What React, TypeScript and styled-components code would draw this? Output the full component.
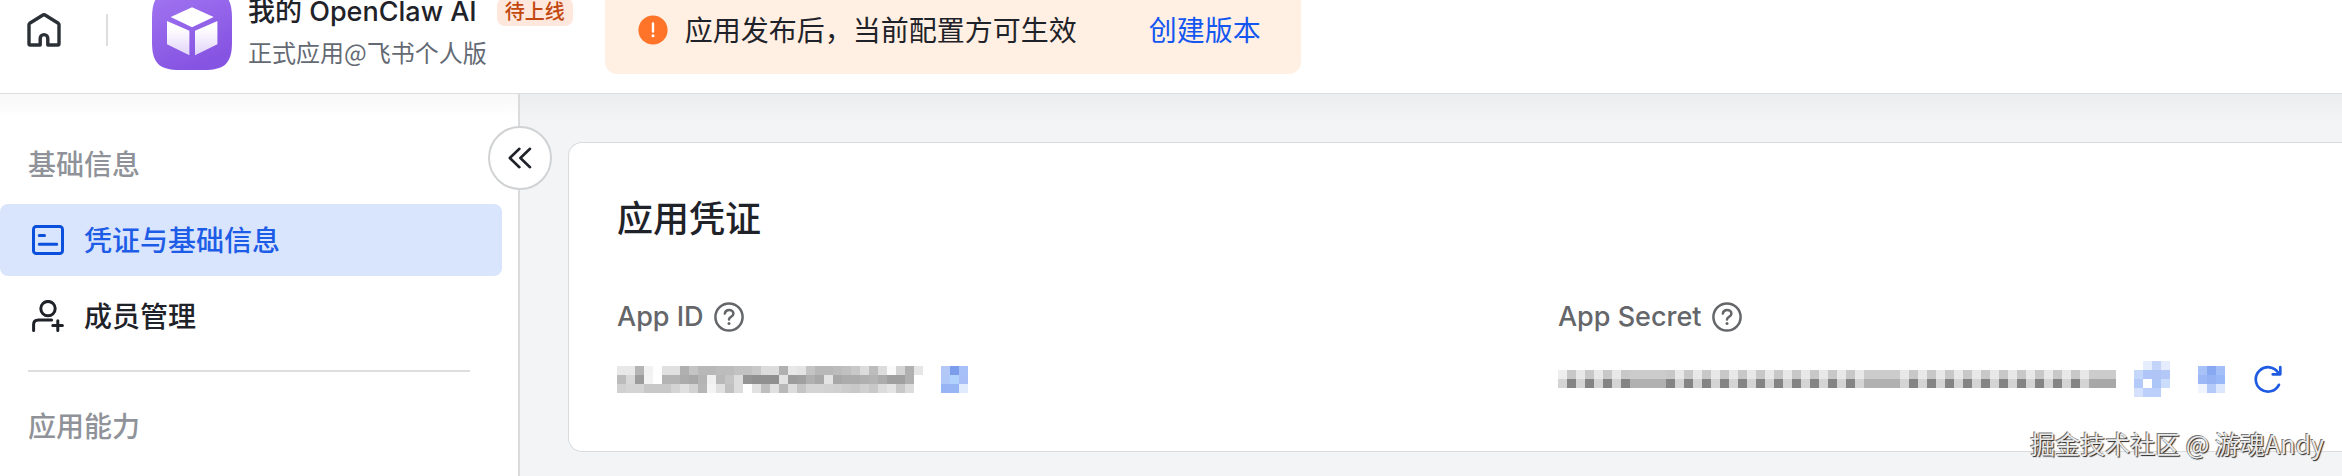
import React from 'react';
import styled, { createGlobalStyle, css } from 'styled-components';

const GlobalStyle = createGlobalStyle`
  *, *::before, *::after { box-sizing: border-box; }
  body {
    margin: 0;
    background: #f2f4f6;
    color: #1f2329;
    font-family: Inter, "Noto Sans CJK SC", sans-serif;
    overflow-x: hidden;
  }
  h1, h2, p, dl, dt, dd, ul { margin: 0; padding: 0; }
  svg { display: block; flex: none; }
`;

const Page = styled.div`
  position: relative;
  min-height: 100vh;
  display: flex;
  flex-direction: column;
  overflow: hidden;
`;

const Header = styled.header`
  display: flex;
  align-items: center;
  height: 94px;
  padding: 0 27px 33px;
  background: #fff;
  border-bottom: 1px solid #dcdee0;
`;

const plainButton = css`
  display: flex;
  align-items: center;
  justify-content: center;
  padding: 0;
  border: 0;
  background: none;
  color: inherit;
  cursor: pointer;
`;

const HomeLink = styled.a`
  color: #2b2f36;
`;

const HeaderRule = styled.span`
  width: 2px;
  height: 32px;
  margin: 0 44px 0 45px;
  background: #dcdee0;
`;

const AppSummary = styled.div`
  margin-left: 16px;
`;

const TitleRow = styled.div`
  display: flex;
  align-items: center;
  gap: 20px;
  height: 42px;
  margin-bottom: 2px;
`;

const AppName = styled.h1`
  font-size: 27px;
  line-height: 42px;
  font-weight: 500;
  white-space: nowrap;
`;

const Tag = styled.span`
  padding: 0 8px;
  border-radius: 8px;
  background: #fee7dc;
  color: #c2480f;
  font-size: 20px;
  line-height: 28px;
  font-weight: 500;
`;

const AppOwner = styled.p`
  color: #646a73;
  font-family: "Noto Sans CJK SC", sans-serif;
  font-size: 24px;
  line-height: 34px;
`;

const Notice = styled.div`
  display: flex;
  align-items: center;
  height: 88px;
  margin-left: 32px;
  padding: 0 40px 0 33px;
  border-radius: 12px;
  background: #fff0e3;
  font-size: 28px;
  white-space: nowrap;
`;

const NoticeText = styled.span`
  margin: 0 72px 0 17px;
  padding-bottom: 2px;
`;

const TextLink = styled.a`
  padding-bottom: 2px;
  color: #1456f0;
  text-decoration: none;
`;

const Body = styled.div`
  flex: 1;
  display: flex;
  background: linear-gradient(#ebecee, #f2f4f6 26px);
`;

const Sidebar = styled.nav`
  position: relative;
  flex: none;
  width: 520px;
  padding: 51px 16px 10px 0;
  border-right: 2px solid #d9dbdd;
  background: linear-gradient(#f8f8f9, #fff 24px);
`;

const GroupTitle = styled.h2`
  padding-left: 28px;
  color: #8f9399;
  font-size: 28px;
  line-height: 40px;
  font-weight: 500;
`;

const NavList = styled.ul`
  display: flex;
  flex-direction: column;
  gap: 4px;
  margin-top: 19px;
  list-style: none;
`;

const NavLink = styled.a<{ $active?: boolean }>`
  display: flex;
  align-items: center;
  gap: 20px;
  height: 72px;
  padding-left: 32px;
  border-radius: 8px;
  background: ${p => (p.$active ? '#d9e4fd' : 'transparent')};
  color: ${p => (p.$active ? '#1d5ce6' : '#1f2329')};
  font-size: 28px;
  font-weight: 500;
  text-decoration: none;
`;

const NavText = styled.span`
  padding-bottom: 2px;
`;

const NavRule = styled.hr`
  height: 2px;
  margin: 18px 32px 35px 28px;
  border: 0;
  background: #dcdedf;
`;

const CollapseButton = styled.button`
  ${plainButton}
  position: absolute;
  top: 32px;
  right: -34px;
  width: 64px;
  height: 64px;
  border: 2px solid #d0d2d4;
  border-radius: 50%;
  background: #fff;
`;

const Main = styled.main`
  flex: 1;
  min-width: 0;
  padding: 48px 0 24px 48px;
`;

const Card = styled.section`
  padding: 52px 0 52px 48px;
  border: 1px solid #d9dcdf;
  border-right: 0;
  border-radius: 14px 0 0 14px;
  background: #fff;
`;

const CardTitle = styled.h2`
  font-size: 36px;
  line-height: 48px;
  font-weight: 500;
`;

const Fields = styled.dl`
  display: grid;
  grid-template-columns: 6fr 5fr;
  margin-top: 54px;
`;

const FieldLabel = styled.dt`
  display: flex;
  align-items: center;
  gap: 10px;
  margin-bottom: 22px;
  color: #646669;
  font-size: 27px;
  line-height: 40px;
  font-weight: 500;
`;

const FieldValue = styled.dd`
  display: flex;
  align-items: center;
  height: 40px;
`;

const IconButton = styled.button<{ $gap: number }>`
  ${plainButton}
  margin-left: ${p => p.$gap}px;
`;

const Watermark = styled.div`
  position: absolute;
  right: 18px;
  bottom: 15px;
  color: #e9e9e9;
  font-family: "Noto Sans CJK SC", sans-serif;
  font-size: 25px;
  line-height: 36px;
  text-shadow: 1px 1px 1px #222, -1px -1px 0 #777;
`;

/* Pixelated block used where a private value is masked. */
const CELL = 9;
const Mosaic = ({ rows }: { rows: string[][] }) => (
  <svg
    width={rows[0].length * CELL}
    height={rows.length * CELL}
    shapeRendering="crispEdges"
    aria-hidden="true"
  >
    {rows.map((row, y) =>
      row.map((fill, x) => (
        <rect key={`${x}-${y}`} x={x * CELL} y={y * CELL} width={CELL} height={CELL} fill={fill} />
      )),
    )}
  </svg>
);

const grays = (line: string) => line.split(' ').map(v => `#${v}${v}${v}`);
const colors = (line: string) => line.split(' ').map(v => `#${v}`);

const idRows = [
  grays('e8 e8 b4 f2 fe e0 e0 b0 c4 b8 b8 bc bc c2 c2 c8 dc dc b0 e8 e4 c4 b8 b8 bc c0 c8 dc bc dc fa d4 b0 e6'),
  grays('bc d8 9c f4 ff b4 b4 ac a8 b4 f0 b8 c4 dc 94 90 90 90 e2 9c a0 b0 a8 e4 a8 ac ac b0 b4 ac a0 a0 b0 ff'),
  grays('d0 d4 d4 c8 c8 c8 d4 e0 d2 b6 f4 e0 c0 dc ff e2 be e0 b8 dc c4 d4 d4 d2 d0 cc c8 d0 c8 dc e4 c8 dc ff'),
];

const secretColumns = Array.from({ length: 62 }, (_, i) => {
  if (i === 0) return ['ee', 'd4'];
  if ((i >= 8 && i <= 11) || (i >= 34 && i <= 37)) return ['cc', 'b0'];
  if (i >= 59) return ['cc', 'a8'];
  const dark = i < 8 ? i % 2 === 1 : i < 34 ? i % 2 === 0 : i % 2 === 1;
  return dark ? ['c8', '84'] : ['e8', 'd4'];
});
const secretRows = [0, 1].map(r => secretColumns.map(c => `#${c[r]}${c[r]}${c[r]}`));

const copyRows = [
  colors('b4c8f8 7c9cec a8c0f8'),
  colors('b0c8f8 b0d2fc a8bef6'),
  colors('98b4f4 98b6f4 e0ecfe'),
];
const revealRows = [
  colors('ffffff e6eefe c4d4f8 e4ecfe'),
  colors('c4d6fa b0c6f8 b0c4f6 b4c8f8'),
  colors('b4cafa ffffff acc6f8 ccdcfc'),
  colors('d4e0fc bccefa bccefa ffffff'),
];
const secretCopyRows = [
  colors('a8c2f8 88a8f2 a4bef8'),
  colors('9cb8f6 94b2f4 98b8f8'),
  colors('eff4fe b4caf8 dce6fc'),
];

const HomeIcon = () => (
  <svg width="34" height="34" viewBox="0 0 34 34" fill="none" stroke="currentColor" strokeWidth="3.4" strokeLinejoin="round" strokeLinecap="round">
    <path d="M2 11.6Q2 10.8 2.7 10.3L16 2Q17 1.4 18 2L31.3 10.3Q32 10.8 32 11.6V30.8Q32 32 30.8 32H20.8V25.4a3.8 3.8 0 0 0-7.6 0V32H3.2Q2 32 2 30.8Z" />
  </svg>
);

const AppLogo = () => (
  <svg width="80" height="80" viewBox="0 0 80 80" aria-hidden="true">
    <defs>
      <linearGradient id="logoBg" x1="0" y1="0" x2="0.4" y2="1">
        <stop offset="0" stopColor="#a276f2" />
        <stop offset="1" stopColor="#8654e2" />
      </linearGradient>
      <linearGradient id="logoFace" x1="0" y1="0" x2="0" y2="1">
        <stop offset="0.2" stopColor="#fff" />
        <stop offset="1" stopColor="#e2d4f9" />
      </linearGradient>
    </defs>
    <path d="M0 28C0 7 7 0 28 0H52C73 0 80 7 80 28V52C80 73 73 80 52 80H28C7 80 0 73 0 52Z" fill="url(#logoBg)" />
    <path d="M40 17.3 61.7 26.9 40 37.3 18.7 26.9Z" fill="#fff" />
    <path d="M15 31 37.4 40.8V65.3L15 54.3Z" fill="url(#logoFace)" />
    <path d="M65.4 31 43 40.8V65.3L65.4 54.3Z" fill="url(#logoFace)" />
  </svg>
);

const WarningIcon = () => (
  <svg width="30" height="30" viewBox="0 0 30 30" aria-hidden="true">
    <circle cx="15" cy="15" r="14.6" fill="#ff7429" />
    <path d="M15 8.5v8" stroke="#fff" strokeWidth="2.4" strokeLinecap="round" />
    <circle cx="15" cy="20.8" r="1.5" fill="#fff" />
  </svg>
);

const CardIcon = () => (
  <svg width="32" height="32" viewBox="0 0 32 32" fill="none" stroke="#0b50dc" strokeWidth="3" strokeLinecap="round">
    <rect x="1.5" y="2.4" width="29" height="27.2" rx="2.8" />
    <path d="M7.3 11.4h5.2M7.3 20.3h17.4" />
  </svg>
);

const MemberIcon = () => (
  <svg width="32" height="32" viewBox="0 0 32 32" fill="none" stroke="currentColor" strokeWidth="3" strokeLinecap="round" strokeLinejoin="round">
    <circle cx="16" cy="8.6" r="7.2" />
    <path d="M1.6 30.4V24.6Q1.6 20 6.4 20H19.6M20.8 25.6H30.4M25.8 20.8V30.4" />
  </svg>
);

const CollapseIcon = () => (
  <svg width="24" height="24" viewBox="0 0 24 24" fill="none" stroke="#1f2329" strokeWidth="2.6" strokeLinecap="round" strokeLinejoin="round">
    <path d="M11.4 2.8 1.8 12l9.6 9.2M22 2.8 12.4 12l9.6 9.2" />
  </svg>
);

const HelpIcon = () => (
  <svg width="30" height="30" viewBox="0 0 30 30" fill="none" stroke="currentColor" strokeWidth="2.5" strokeLinecap="round" strokeLinejoin="round">
    <circle cx="15" cy="15" r="13.6" />
    <path d="M10.8 11.6C11.2 9.2 12.9 8 15 8c2.5 0 4.4 1.5 4.4 3.700C19.4 14.8 15 14.800 15 17.6" />
    <circle cx="15" cy="21.600" r="1.500" fill="currentColor" stroke="none" />
  </svg>
);

const RefreshIcon = () => (
  <svg width="30" height="30" viewBox="0 0 30 30" fill="none" stroke="#1f5be0" strokeWidth="2.7" strokeLinecap="round" strokeLinejoin="round">
    <path d="M25.9 20.8A12.2 12.2 0 1 1 25.3 8.9M27.3 3.2V10.3H19.7" />
  </svg>
);

export default function App() {
  return (
    <>
      <GlobalStyle />
      <Page>
        <Header>
          <HomeLink href="#home" aria-label="首页">
            <HomeIcon />
          </HomeLink>
          <HeaderRule />
          <AppLogo />
          <AppSummary>
            <TitleRow>
              <AppName>我的 OpenClaw AI</AppName>
              <Tag>待上线</Tag>
            </TitleRow>
            <AppOwner>正式应用@飞书个人版</AppOwner>
          </AppSummary>
          <Notice role="status">
            <WarningIcon />
            <NoticeText>应用发布后，当前配置方可生效</NoticeText>
            <TextLink href="#version">创建版本</TextLink>
          </Notice>
        </Header>
        <Body>
          <Sidebar>
            <GroupTitle>基础信息</GroupTitle>
            <NavList>
              <li>
                <NavLink href="#credentials" $active aria-current="page">
                  <CardIcon />
                  <NavText>凭证与基础信息</NavText>
                </NavLink>
              </li>
              <li>
                <NavLink href="#members">
                  <MemberIcon />
                  <NavText>成员管理</NavText>
                </NavLink>
              </li>
            </NavList>
            <NavRule />
            <GroupTitle>应用能力</GroupTitle>
            <CollapseButton type="button" aria-label="收起导航">
              <CollapseIcon />
            </CollapseButton>
          </Sidebar>
          <Main>
            <Card>
              <CardTitle>应用凭证</CardTitle>
              <Fields>
                <div>
                  <FieldLabel>
                    App ID
                    <HelpIcon />
                  </FieldLabel>
                  <FieldValue>
                    <Mosaic rows={idRows} />
                    <IconButton type="button" $gap={18} aria-label="复制 App ID">
                      <Mosaic rows={copyRows} />
                    </IconButton>
                  </FieldValue>
                </div>
                <div>
                  <FieldLabel>
                    App Secret
                    <HelpIcon />
                  </FieldLabel>
                  <FieldValue>
                    <Mosaic rows={secretRows} />
                    <IconButton type="button" $gap={18} aria-label="显示 App Secret">
                      <Mosaic rows={revealRows} />
                    </IconButton>
                    <IconButton type="button" $gap={28} aria-label="复制 App Secret">
                      <Mosaic rows={secretCopyRows} />
                    </IconButton>
                    <IconButton type="button" $gap={28} aria-label="重置 App Secret">
                      <RefreshIcon />
                    </IconButton>
                  </FieldValue>
                </div>
              </Fields>
            </Card>
          </Main>
        </Body>
        <Watermark>掘金技术社区 @ 游魂Andy</Watermark>
      </Page>
    </>
  );
}
